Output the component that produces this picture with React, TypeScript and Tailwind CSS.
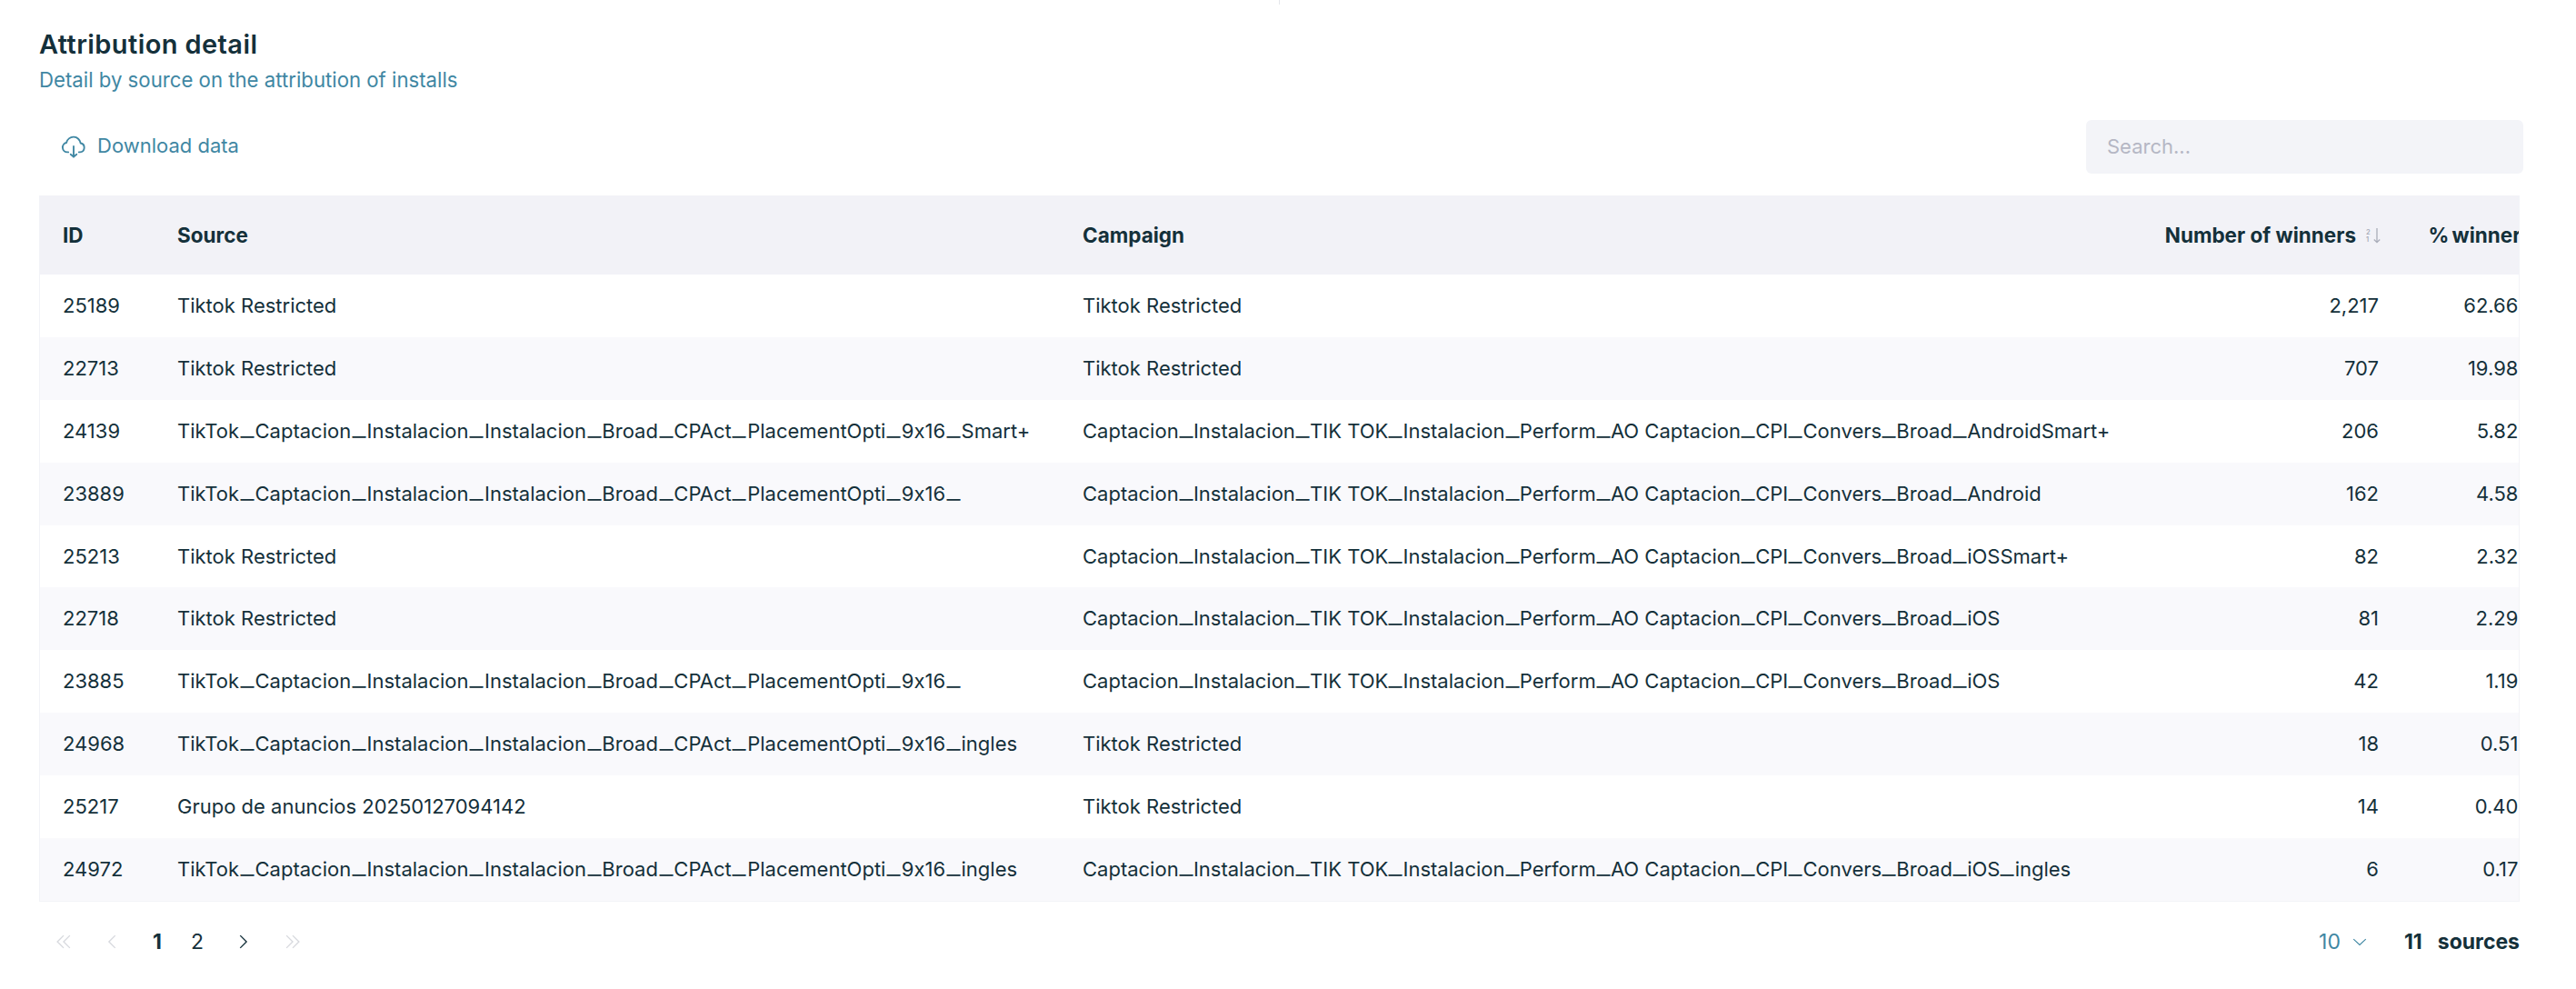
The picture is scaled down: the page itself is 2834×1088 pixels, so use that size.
import React from "react";

const A = "TikTok_Captacion_Instalacion_Instalacion_Broad_CPAct_PlacementOpti_9x16_";
const C = "Captacion_Instalacion_TIK TOK_Instalacion_Perform_AO Captacion_CPI_Convers_Broad_";
const T = "Tiktok Restricted";
const rows = [
  ["25189", T, T, "2,217", "62.66%"],
  ["22713", T, T, "707", "19.98%"],
  ["24139", A + "Smart+", C + "AndroidSmart+", "206", "5.82%"],
  ["23889", A, C + "Android", "162", "4.58%"],
  ["25213", T, C + "iOSSmart+", "82", "2.32%"],
  ["22718", T, C + "iOS", "81", "2.29%"],
  ["23885", A, C + "iOS", "42", "1.19%"],
  ["24968", A + "ingles", T, "18", "0.51%"],
  ["25217", "Grupo de anuncios 20250127094142", T, "14", "0.40%"],
  ["24972", A + "ingles", C + "iOS_ingles", "6", "0.17%"],
];

function Chev({ d, cls }: { d: string; cls: string }) {
  return (
    <svg viewBox="0 0 16 16" fill="none" stroke="currentColor" strokeWidth="1" className={cls}>
      <path d={d} />
    </svg>
  );
}

function Wide({ text, cls }: { text: string; cls: string }) {
  const parts = text.split("_");
  return (
    <>
      {parts.map((p, i) => (
        <React.Fragment key={i}>
          {p}
          {i < parts.length - 1 && <span className={cls}>_</span>}
        </React.Fragment>
      ))}
    </>
  );
}

export default function App() {
  return (
    <div className="h-[1088px] w-[2834px] overflow-hidden bg-white font-['Inter',sans-serif] text-[#14303a] [font-variant-ligatures:none] [font-feature-settings:'calt'_0]">
      <div className="ml-[1407px] h-[5px] w-px bg-[#e4e6ea]" />
      <div className="pl-[43px] pr-[58px]">
        <h2 className="mt-[26px] text-[29px] font-semibold leading-[36px] tracking-[0.4px]">Attribution detail</h2>
        <p className="mt-[6px] text-[22.2px] leading-[30px] text-[#3f87a3]">Detail by source on the attribution of installs</p>
        <div className="mt-[29px] flex h-[59px] items-center justify-between">
          <button className="ml-[24px] flex items-center gap-[12px] pb-[2px] text-[22px] text-[#3f87a3]">
            <svg viewBox="0 0 24 24" fill="none" stroke="currentColor" strokeWidth="1.6" strokeLinecap="round" strokeLinejoin="round" className="h-[28px] w-[28px]">
              <path d="M7 17.5H6a4.5 4.5 0 0 1-.8-8.9 6.8 6.8 0 0 1 13.4.4A4.3 4.3 0 0 1 18 17.5h-1" />
              <path d="M12 12v10M9.2 19.5 12 22l2.8-2.5" />
            </svg>
            Download data
          </button>
          <input
            placeholder="Search..."
            className="h-[59px] w-[481px] rounded-[6px] bg-[#f3f4f8] px-[23px] pb-[2px] text-[22px] outline-none placeholder:text-[#b5b7c4]"
          />
        </div>
        <div className="mt-[24px] w-[2729px] overflow-hidden border-x border-b border-[#f2f3f7]">
          <table className="w-[2760px] table-fixed border-collapse text-left text-[22px]">
            <colgroup>
              <col className="w-[151px]" />
              <col className="w-[996px]" />
              <col className="w-[1200px]" />
              <col className="w-[232px]" />
              <col className="w-[181px]" />
            </colgroup>
            <thead className="bg-[#f2f2f7]">
              <tr className="h-[87px] text-[22.5px] font-bold">
                <th className="pl-[25px]">ID</th>
                <th className="pl-0">Source</th>
                <th className="pl-0">Campaign</th>
                <th className="whitespace-nowrap pr-[2px]">
                  <div className="flex items-center justify-end">
                    Number of winners
                    <svg viewBox="0 0 18 18" className="ml-[11px] h-[18px] w-[18px] shrink-0 text-[#a9adb9]" fill="none" stroke="currentColor" strokeWidth="1.3">
                      <text x="0" y="7.5" fontSize="7.5" fontWeight="600" fill="currentColor" stroke="none" fontFamily="Inter">2</text>
                      <text x="0" y="16" fontSize="7.5" fontWeight="600" fill="currentColor" stroke="none" fontFamily="Inter">1</text>
                      <path d="M12 1v15.5M8.8 13.5l3.2 3.2 3.2-3.2" />
                    </svg>
                  </div>
                </th>
                <th className="whitespace-nowrap pr-[18px] text-right [word-spacing:-2px]">% winners</th>
              </tr>
            </thead>
            <tbody>
              {rows.map((r, i) => (
                <tr key={r[0]} className={i % 2 ? "h-[68.9px] bg-[#f9f9fc]" : "h-[68.9px] bg-white"}>
                  <td className="pl-[25px]">{r[0]}</td>
                  <td className="whitespace-nowrap">
                    <Wide text={r[1]} cls="mx-[3.7px] inline-block origin-center -translate-y-[2px] scale-x-[1.5]" />
                  </td>
                  <td className="whitespace-nowrap">
                    <Wide text={r[2]} cls="mx-[3.1px] inline-block origin-center -translate-y-[2px] scale-x-[1.5]" />
                  </td>
                  <td className="pr-[6px] text-right">{r[3]}</td>
                  <td className="pr-[12px] text-right">{r[4]}</td>
                </tr>
              ))}
            </tbody>
          </table>
        </div>
        <div className="mt-[14px] flex h-[60px] w-[2729px] items-center justify-between">
          <div className="flex items-center pl-[16px] text-[23px]">
            <Chev d="M8 3 3 8l5 5M13 3 8 8l5 5" cls="h-[22px] w-[22px] text-[#d7d9de]" />
            <Chev d="M10 3 5 8l5 5" cls="ml-[32px] h-[22px] w-[22px] text-[#d7d9de]" />
            <span className="ml-[33px] font-bold">1</span>
            <span className="ml-[32px]">2</span>
            <Chev d="M6 3l5 5-5 5" cls="ml-[32px] h-[22px] w-[22px]" />
            <Chev d="M3 3l5 5-5 5M8 3l5 5-5 5" cls="ml-[33px] h-[22px] w-[22px] text-[#d7d9de]" />
          </div>
          <div className="flex items-center text-[23px]">
            <span className="text-[#3f87a3]">10</span>
            <Chev d="M2 5.5 8 11l6-5.5" cls="ml-[12px] h-[18px] w-[18px] text-[#3f87a3]" />
            <span className="ml-[40px] font-bold">11</span>
            <span className="ml-[17px] font-bold">sources</span>
          </div>
        </div>
      </div>
    </div>
  );
}
